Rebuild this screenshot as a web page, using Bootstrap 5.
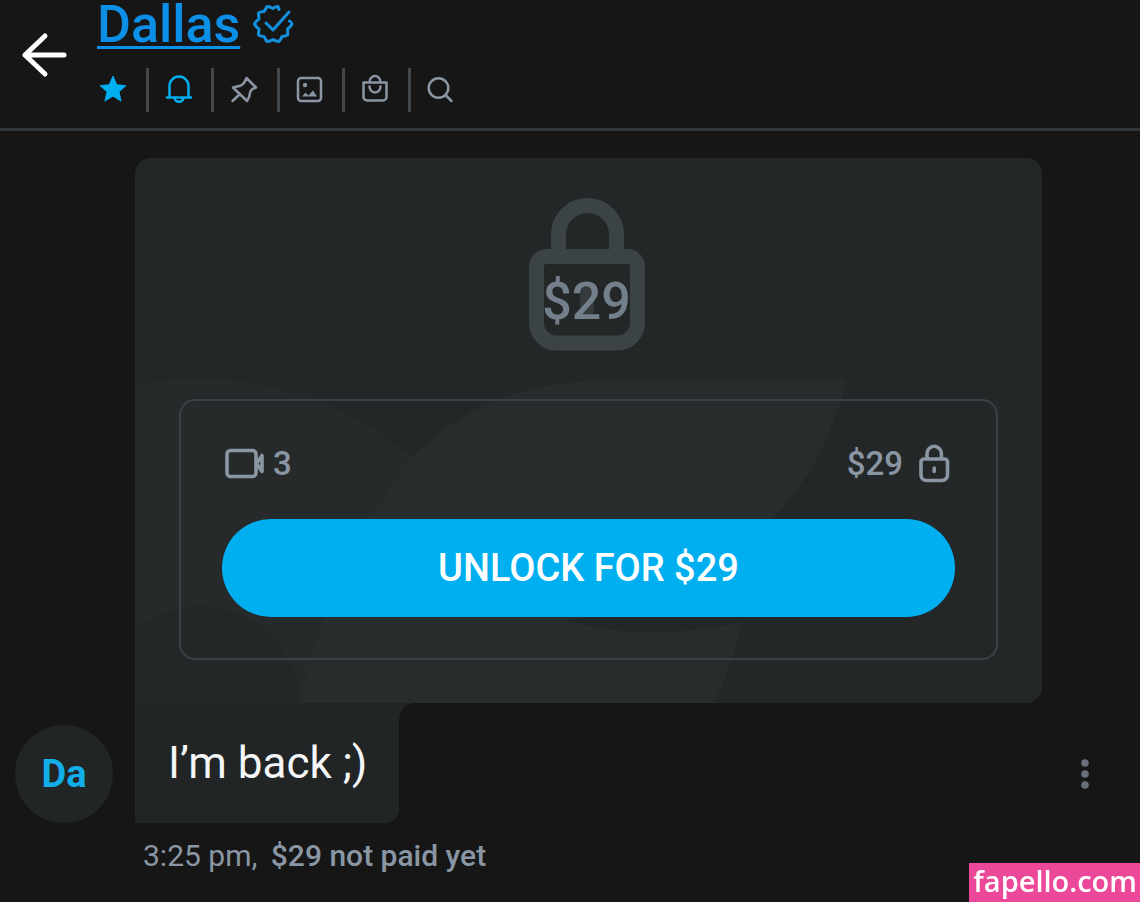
<!DOCTYPE html>
<html lang="en" data-bs-theme="dark">
<head>
<meta charset="utf-8">
<meta name="viewport" content="width=device-width, initial-scale=1">
<title>Dallas</title>
<link href="https://cdn.jsdelivr.net/npm/bootstrap@5.3.0/dist/css/bootstrap.min.css" rel="stylesheet">
<style>
  body { background: #161617; color: #f5f6f7; font-family: Roboto, "Liberation Sans", sans-serif; }
  svg { display: block; }
  .chat-header { border-bottom: 3px solid #32373b; padding-bottom: 16px; }
  .back-btn { width: 83px; padding: 19px 0 0 20px; color: #fff; }
  .name-row { padding-left: 14px; height: 50px; gap: 12px; }
  .name-link { color: #0c8fe6; font-size: 52px; line-height: 50px; font-weight: 500; text-decoration-thickness: 3px; text-underline-offset: 4px; text-decoration-skip-ink: none; }
  .name-link + svg { margin-bottom: 3px; }
  .tools { margin-top: 18px; width: 393px; height: 44px; }
  .tool-btn { flex: 1 1 0; color: #8a96a3; border-width: 0 3px 0 0; border-color: #42474b; border-radius: 0; padding: 0 2px 2px 0; }
  .tool-btn:last-child { border-color: transparent; }
  .tool-on { color: #00aff0; }
  .message { display: grid; grid-template-columns: 98px minmax(0, 1fr) 86px; padding: 27px 12px 0 15px; align-items: end; }
  .message-body { padding-left: 22px; }
  .avatar { height: 98px; background: #222526; color: #12aeea; font-size: 38px; }
  .paywall { background: #242728; border-radius: 16px 16px 16px 0; padding: 40px 44px 43px; overflow: hidden; }
  .paywall-art { position: absolute; inset: 0; width: 100%; height: 100%; }
  .price-lock { width: 120px; height: 153px; margin: 0 auto 48px; color: #3c4347; }
  .price-over { inset: 54px 4px 0 0; color: #737f8b; font-size: 52px; font-weight: 500; line-height: 100px; }
  .offer { border: 2px solid #3b4044; border-radius: 16px; padding: 41px; }
  .offer-info { color: #8a96a3; font-size: 33px; line-height: 44px; font-weight: 500; height: 44px; margin-bottom: 33px; }
  .unlock-btn { background: #00aff0; color: #fff; height: 98px; font-size: 38px; font-weight: 500; }
  .unlock-btn:hover { background: #0099d6; color: #fff; }
  .bubble { background: #222526; border-radius: 0 0 14px 0; padding: 27px 32px 27px 33px; font-size: 44px; line-height: 66px; }
  .bubble::after { content: ""; position: absolute; left: 100%; top: 0; width: 14px; height: 14px; background: radial-gradient(circle at 100% 100%, transparent 13px, #222526 14px); }
  .meta { grid-column: 2; color: #8a96a3; font-size: 30px; line-height: 36px; padding: 15px 0 0 30px; }
  .pay-state { font-weight: 500; margin-left: 6px; }
  .site-mark { background: #ec4899; color: #fff; font-family: "Open Sans", "Noto Sans", sans-serif; font-size: 29px; line-height: 35px; font-weight: 600; padding: 0 3px 4px 4px; }
</style>
</head>
<body>
<header class="chat-header d-flex align-items-start">
  <button type="button" class="back-btn btn border-0" aria-label="Back">
    <svg width="48" height="70" viewBox="0 0 48 70" fill="none" stroke="currentColor" stroke-width="5" stroke-linecap="round" stroke-linejoin="round"><path d="M44 36H5M25 17 5 36 25 55"/></svg>
  </button>
  <div>
    <div class="name-row d-flex align-items-center">
      <a class="name-link" href="#">Dallas</a>
      <svg width="42" height="42" viewBox="0 0 42 42" fill="none" stroke="#128fdd" stroke-width="3" stroke-linecap="round" stroke-linejoin="round" role="img" aria-label="Verified"><path d="M27 6.500 26 3.500q-3 0-5 2-3-2-6-2-1.500 3-3 5-3 0-5.500 1.500 0 3 .5 6-3 2-4.500 5 1.500 3 4.500 5-.5 3-.5 6 2.500 1.500 5.500 1.500 1.500 3 3 5 3 0 6-2 3 2 6 2 2-2 3-5 3 0 5.500-1.500.5-3 0-6 3-2 4.500-5-.5-2-2.500-3"/><path d="M14 20l7 7L37 9"/></svg>
    </div>
    <nav class="tools d-flex" aria-label="Conversation tools">
      <button type="button" class="tool-btn tool-on btn d-flex align-items-center justify-content-center" aria-label="Favourite"><svg width="30" height="30" viewBox="0 0 30 30" fill="currentColor" stroke="currentColor" stroke-linejoin="round"><path d="m15 2 3.700 8.800 9.300.8-7.100 6.200 2.200 9.300-8.100-5-8.100 5 2.200-9.300L2 11.600l9.300-.8z"/></svg></button>
      <button type="button" class="tool-btn tool-on btn d-flex align-items-center justify-content-center" aria-label="Notifications"><svg width="30" height="30" viewBox="0 0 30 30" fill="none" stroke="currentColor" stroke-width="2.500" stroke-linecap="round" stroke-linejoin="round"><path d="M3 23.500h24M5.500 23V12a9.500 9.500 0 0 1 19 0v11M10.500 24c1 5 8 5 9 0"/></svg></button>
      <button type="button" class="tool-btn btn d-flex align-items-center justify-content-center" aria-label="Pin"><svg width="30" height="30" viewBox="0 0 30 30" fill="none" stroke="currentColor" stroke-width="2.500" stroke-linecap="round" stroke-linejoin="round"><path d="M17.500 4 27 13.500q-5 1.500-6 5 0 4-3 8.500L4 13.500q4.500-1 8-2 3.500-2 5.500-7.500zM11 20l-7.500 7"/></svg></button>
      <button type="button" class="tool-btn btn d-flex align-items-center justify-content-center" aria-label="Gallery"><svg width="30" height="30" viewBox="0 0 30 30" fill="none" stroke="currentColor" stroke-width="2.500" stroke-linejoin="round"><rect x="3" y="4" width="23" height="23" rx="3"/><circle cx="10" cy="11" r="2.200" fill="currentColor" stroke="none"/><path d="m7 22.500 3.500-4 3 3 4.500-5 4 6z" fill="currentColor" stroke="none"/></svg></button>
      <button type="button" class="tool-btn btn d-flex align-items-center justify-content-center" aria-label="Purchases"><svg width="30" height="30" viewBox="0 0 30 30" fill="none" stroke="currentColor" stroke-width="2.500" stroke-linecap="round" stroke-linejoin="round"><path d="M3.500 8.500h23V23a3.500 3.500 0 0 1-3.500 3.500H7A3.500 3.500 0 0 1 3.500 23zM9.500 8a5.500 6 0 0 1 11 0M9.500 12.500a5.500 6 0 0 0 11 0"/></svg></button>
      <button type="button" class="tool-btn btn d-flex align-items-center justify-content-center" aria-label="Search"><svg width="30" height="30" viewBox="0 0 30 30" fill="none" stroke="currentColor" stroke-width="2.500" stroke-linecap="round"><circle cx="12.500" cy="14" r="9.800"/><path d="m19.500 21 6 6"/></svg></button>
    </nav>
  </div>
</header>

<main class="message">
  <div class="avatar rounded-circle d-flex align-items-center justify-content-center fw-bold">Da</div>
  <div class="message-body">
    <section class="paywall position-relative">
      <svg class="paywall-art" viewBox="0 0 907 545" preserveAspectRatio="xMidYMax slice" aria-hidden="true">
        <path fill="#262a2a" fill-rule="evenodd" d="M-262 548a327 327 0 1 1 654 0a327 327 0 1 1-654 0M-35 548a100 100 0 1 0 200 0a100 100 0 1 0-200 0"/>
        <path fill="#282c2d" d="M165 545C185 460 220 370 277 300c60-62 125-79 230-79h205c-16 58-38 104-74 139-53 53-118 90-208 103 60 15 118 14 177 1-7 31-16 56-28 81z"/>
      </svg>
      <div class="price-lock position-relative">
        <svg width="116" height="153" viewBox="0 0 116 153" fill="none" stroke="currentColor" stroke-width="15"><path d="M29.500 52V36.500a29 29 0 0 1 58 0V52"/><path d="M17.500 58.500h81a10 10 0 0 1 10 10V125a20 20 0 0 1-20 20h-61a20 20 0 0 1-20-20V68.500a10 10 0 0 1 10-10z"/><rect x="51" y="86" width="14" height="32" rx="6" fill="currentColor" stroke="none" opacity=".7"/></svg>
        <div class="price-over position-absolute text-center">$29</div>
      </div>
      <div class="offer position-relative">
        <div class="offer-info d-flex justify-content-between">
          <div class="d-flex align-items-center gap-2">
            <svg width="43" height="34" viewBox="0 0 43 34" fill="none" stroke="currentColor" stroke-width="3.600" stroke-linejoin="round"><rect x="5" y="3.500" width="29" height="26" rx="3.500"/><path d="m34.500 16.500 5.500-8v16z"/></svg>
            <span>3</span>
          </div>
          <div class="d-flex align-items-center gap-3">
            <span>$29</span>
            <svg width="36" height="40" viewBox="0 0 36 40" fill="none" stroke="currentColor" stroke-width="3.600"><path d="M8 15v-5.500a7.200 7.200 0 0 1 14.400 0V15"/><path d="M5 15h20.500a3 3 0 0 1 3 3v13a5.500 5.500 0 0 1-5.500 5.500H7.500A5.500 5.500 0 0 1 2 31V18a3 3 0 0 1 3-3z"/><path d="M15.200 24v3.500" stroke-linecap="round"/></svg>
          </div>
        </div>
        <button type="button" class="unlock-btn btn border-0 rounded-pill w-100 p-0">UNLOCK FOR $29</button>
      </div>
    </section>
    <div class="bubble position-relative d-inline-block align-top">I’m back ;)</div>
  </div>
  <button type="button" class="btn border-0 p-0 d-flex justify-content-center" aria-label="Message options">
    <svg width="12" height="98" viewBox="0 0 12 98" fill="#6a707b"><circle cx="6" cy="38" r="3.800"/><circle cx="6" cy="49" r="3.800"/><circle cx="6" cy="60" r="3.800"/></svg>
  </button>
  <div class="meta">3:25 pm, <span class="pay-state">$29 not paid yet</span></div>
</main>

<a class="site-mark position-fixed bottom-0 end-0 text-decoration-none" href="#">fapello.com</a>
<script src="https://cdn.jsdelivr.net/npm/bootstrap@5.3.0/dist/js/bootstrap.bundle.min.js"></script>
</body>
</html>
